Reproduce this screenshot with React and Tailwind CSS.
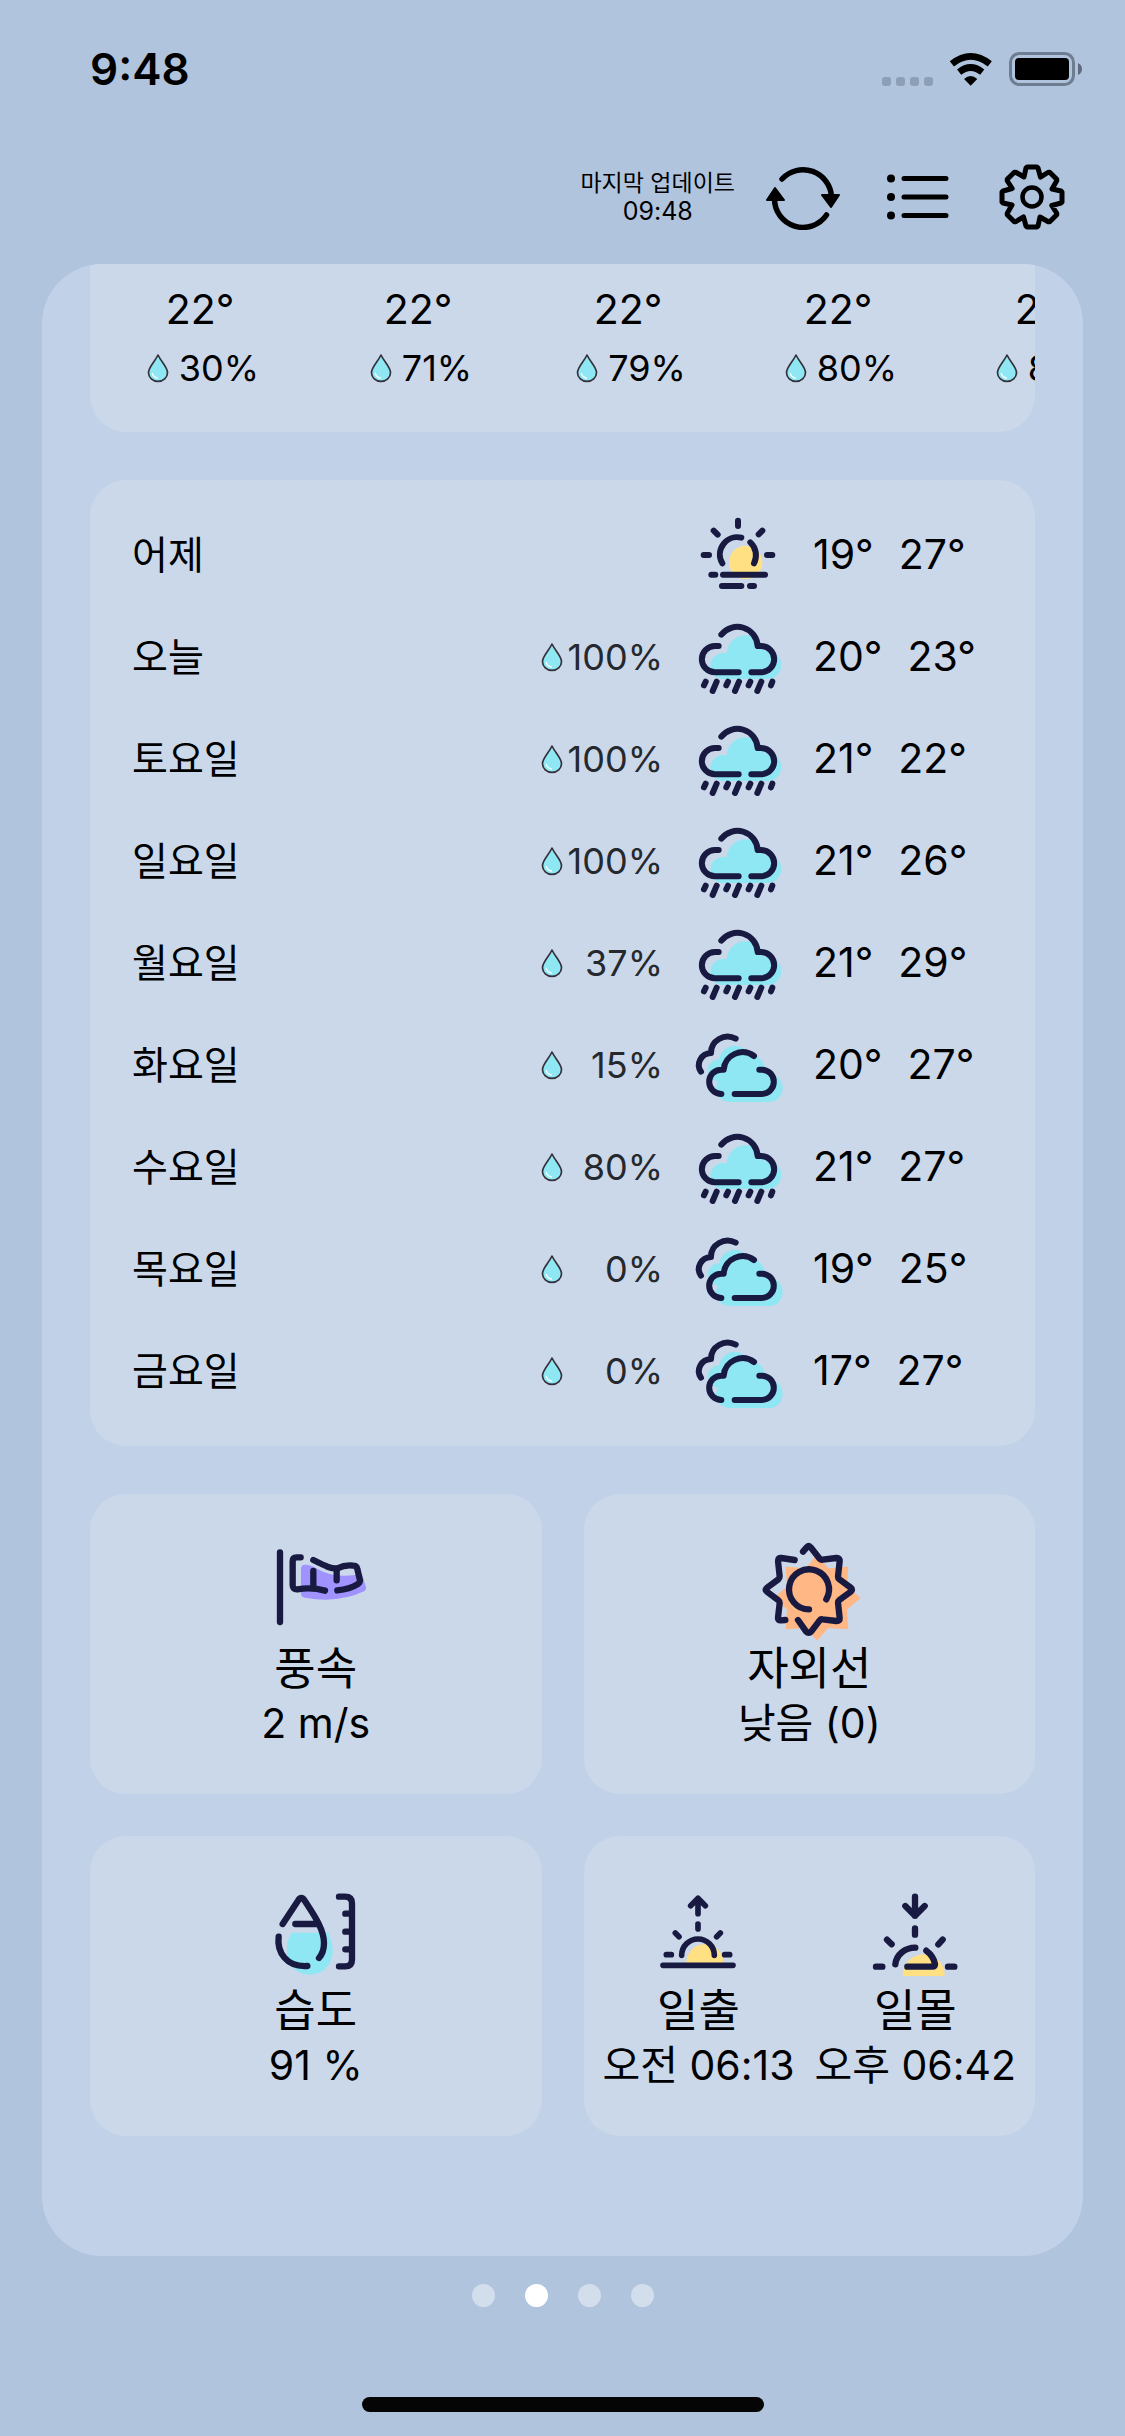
const NAVY = "#181a42";
const CYAN = "#8ee7f2";
const YELLOW = "#ffe082";

const stroke = (width, color = NAVY) => ({
  fill: "none",
  stroke: color,
  strokeWidth: width,
  strokeLinecap: "round",
  strokeLinejoin: "round",
});

function Drop({ className }) {
  return (
    <svg viewBox="63 456 66 90" className={className} aria-hidden="true">
      <path
        d="M96 462 C86 483 67.500 498 67.500 515 A28.500 26 0 0 0 124.500 515 C124.500 498 106 483 96 462Z"
        fill={CYAN}
        stroke="#33303a"
        strokeWidth="5"
        strokeLinejoin="round"
      />
      <path d="M79 517 Q81 528 94 531" {...stroke(4, "#ffffff")} />
    </svg>
  );
}

function HazySun() {
  return (
    <svg viewBox="519 60 270 270" className="size-[90px] shrink-0" role="img" aria-label="안개">
      <circle cx="677" cy="217" r="50" fill={YELLOW} />
      <g {...stroke(18)}>
        <path d="M654 92V108 M581 122L593 134 M727 122L716 133 M551 195H567 M741 195H757" />
        <path d="M574 254H586 M609 254H735 M606 288H664 M690 288H702" />
        <path d="M664 143A52 52 0 0 0 607 220 M691 157A53 53 0 0 1 702 220" />
      </g>
    </svg>
  );
}

function Rain() {
  return (
    <svg viewBox="519 368 270 270" className="size-[90px] shrink-0" role="img" aria-label="비">
      <path d="M610 569A39 39 0 0 1 610 491H620A57 57 0 0 1 733 485H742A42 42 0 0 1 742 569Z" fill={CYAN} />
      <g {...stroke(18)}>
        <path d="M604 436A61 61 0 0 1 713 470H723A39 39 0 0 1 723 549H694 M596 470H585A39 39 0 0 0 585 549H656" />
        <path d="M557 577L552 588 M590 577L578 605 M624 577L619 588 M657 577L645 605 M691 577L686 588 M724 577L712 605 M757 577L753 588" />
      </g>
    </svg>
  );
}

function Cloudy() {
  return (
    <svg viewBox="520 300 270 270" className="size-[90px] shrink-0" role="img" aria-label="흐림">
      <path d="M593 485A34 34 0 0 1 593 418H599A47 47 0 0 1 691 412V485Z" fill={CYAN} />
      <path d="M628 546A40 40 0 0 1 612 470L625 430A60 60 0 0 1 738 462H749A40 42 0 0 1 749 546Z" fill={CYAN} />
      <g {...stroke(18)}>
        <path d="M703 408A57 57 0 0 0 612 449H605A36 36 0 0 0 605 522 M719 449H726A36 36 0 0 1 726 522H645" />
        <path d="M648 356A50 48 0 0 0 574 399A38 36 0 0 0 544 455" />
      </g>
    </svg>
  );
}

function Windsock() {
  return (
    <svg viewBox="42 53 312 312" className="size-[104px]" aria-hidden="true">
      <path
        d="M165 133C195 133 205 155 250 163Q290 170 335 160L348 200Q350 208 342 213Q265 250 165 232Q153 230 153 220V145Q153 133 165 133Z"
        fill="#a093ff"
      />
      <g {...stroke(19)}>
        <path d="M90 96V305 M190 152V202 M260 146V180" />
        <path d="M152 111H140Q128 111 128 122V194Q128 208 142 207Q185 200 225 211" />
        <path d="M190 119C230 139 245 146 262 144Q285 133 310 136Q320 136 322 146L330 180Q330 188 322 192Q300 206 262 210" />
      </g>
    </svg>
  );
}

function UvSun() {
  return (
    <svg viewBox="112 53 312 312" className="size-[104px]" aria-hidden="true">
      <path
        d="M292 105L325 146L384 141L380 199L420 233L380 267L384 325L325 321L292 358L259 321L200 325L204 267L165 233L204 199L200 141L259 146Z"
        fill="#ffb885"
        stroke="#ffb885"
        strokeWidth="4"
        strokeLinejoin="round"
      />
      <g {...stroke(19)}>
        <path d="M250 94L261 81Q267 73 273 81L300 115Q304 119 309 118L350 113Q361 112 360 123L355 169Q355 174 359 177L393 202Q401 208 393 214L359 239Q355 242 355 247L360 293Q361 303 350 302L309 297Q303 296 300 300L275 333Q267 342 259 333L235 299" />
        <path d="M197 299L184 300Q174 301 175 292L180 248Q180 243 176 240L142 214Q134 208 142 202L176 177Q180 173 180 168L175 122Q174 112 185 113L225 119" />
        <path d="M320 237A60 60 0 1 0 268 267" />
      </g>
    </svg>
  );
}

function Humidity() {
  return (
    <svg viewBox="42 28 312 312" className="size-[104px]" aria-hidden="true">
      <path d="M130 186H235Q248 215 248 243A69 69 0 0 1 110 243Q110 215 120 192Q123 186 130 186Z" fill={CYAN} />
      <g {...stroke(19)}>
        <path d="M98 160L144 90Q154 74 164 90C190 130 222 175 222 217Q222 245 207 262 M136 160H205 M86 198C80 245 110 290 172 286" />
        <path d="M267 78H285Q306 78 306 98V267Q306 287 285 287H267 M286 129H304 M286 183H304 M286 236H304" />
      </g>
    </svg>
  );
}

function Sunrise() {
  return (
    <svg viewBox="174 28 312 312" className="size-[104px]" aria-hidden="true">
      <path d="M295 276A55.500 55.500 0 0 1 406 276Z" fill={YELLOW} />
      <g {...stroke(17)}>
        <path d="M225 284H435 M235 252H250 M410 252H425 M262 187L273 198 M397 187L386 198 M330 160V175" />
        <path d="M281 254A48 48 0 0 1 379 254 M330 129V84 M308 105L330 83L352 105" />
      </g>
    </svg>
  );
}

function Sunset() {
  return (
    <svg viewBox="822 28 312 312" className="size-[104px]" aria-hidden="true">
      <path d="M941 312A63 61 0 0 1 1067 312Q1067 316 1063 316H945Q941 316 941 312Z" fill={YELLOW} />
      <g {...stroke(19)}>
        <path d="M861 288H880 M1077 288H1096 M894 207L908 221 M1061 207L1048 221 M978 173V192" />
        <path d="M978 78V135 M949 106L978 135L1007 106" />
        <path d="M919 281A60 54 0 0 1 979 231 M1012 240C1028 252 1036 268 1038 280Q1039 288 1030 288H955" />
      </g>
    </svg>
  );
}

function StatusBar() {
  return (
    <div className="flex items-end justify-between pt-[42px] pr-[42px] pl-[90px] text-black">
      <div className="font-['Inter',sans-serif] text-[44px] leading-[54px] font-semibold">9:48</div>
      <div className="mb-[10px] flex items-end gap-[15px]">
        <div className="flex gap-[5px]">
          {[0, 1, 2, 3].map((i) => (
            <span key={i} className="size-[9px] rounded-[3px] bg-[#8d9fb6]" />
          ))}
        </div>
        <svg viewBox="295 66 138 100" className="h-[33px] w-[46px]" aria-hidden="true">
          <path d="M306 99Q363 54 421 99" fill="none" stroke="#000" strokeWidth="20" />
          <path d="M328 124Q363 96 398 124" fill="none" stroke="#000" strokeWidth="20" />
          <path d="M343 145Q363 126 383 145L363 165Z" fill="#000" />
        </svg>
        <svg viewBox="0 0 74 34" className="h-[34px] w-[74px]" aria-hidden="true">
          <rect x="1.500" y="1.500" width="63" height="31" rx="9" fill="none" stroke="#6f7d90" strokeWidth="3" />
          <rect x="6" y="6" width="54" height="22" rx="4" fill="#000" />
          <path d="M69 11Q73 13 73 17T69 23Z" fill="#5f6b7c" />
        </svg>
      </div>
    </div>
  );
}

function gearPath() {
  const points = [];
  for (let i = 0; i < 8; i++) {
    const a = (i * Math.PI) / 4;
    for (const [x, y] of [
      [-8, -20],
      [-6, -29],
      [-5, -30],
      [5, -30],
      [6, -29],
    ]) {
      points.push(
        `${(33 + x * Math.cos(a) - y * Math.sin(a)).toFixed(2)} ${(33 + x * Math.sin(a) + y * Math.cos(a)).toFixed(2)}`
      );
    }
  }
  return `M${points.join("L")}Z`;
}

function Toolbar() {
  return (
    <header className="mt-[68px] flex items-center justify-end pr-[60px] text-black">
      <p className="mr-[28px] text-center text-[23px] leading-[28px]">
        마지막 업데이트
        <br />
        <span className="text-[25px]">09:48</span>
      </p>
      <button type="button" aria-label="새로고침" className="mr-[43px]">
        <svg viewBox="0 0 80 66" className="h-[66px] w-[80px]" aria-hidden="true">
          <path d="M19 15A28.500 28.500 0 0 1 68.500 33 M11.500 35A28.500 28.500 0 0 0 63.500 51" {...stroke(5.5, "#000")} />
          <path d="M59 31H76L68 43Z M12 24L4 36H21Z" fill="#000" stroke="#000" strokeWidth="2" strokeLinejoin="round" />
        </svg>
      </button>
      <button type="button" aria-label="지역 목록" className="mr-[50px]">
        <svg viewBox="0 0 63 48" className="h-[48px] w-[63px]" aria-hidden="true">
          <path d="M18 5.500H60 M18 24H60 M18 42.500H60" {...stroke(5, "#000")} />
          <circle cx="5" cy="5.500" r="4" />
          <circle cx="5" cy="24" r="4" />
          <circle cx="5" cy="42.500" r="4" />
        </svg>
      </button>
      <button type="button" aria-label="설정">
        <svg viewBox="0 0 66 66" className="size-[66px]" aria-hidden="true">
          <path d={gearPath()} {...stroke(5, "#000")} />
          <circle cx="33" cy="33" r="9.500" {...stroke(4.5, "#000")} />
        </svg>
      </button>
    </header>
  );
}

const hours = [
  { temp: "22°", rain: "30%", width: "w-[220px]" },
  { temp: "22°", rain: "71%", width: "w-[216px]" },
  { temp: "22°", rain: "79%", width: "w-[204px]" },
  { temp: "22°", rain: "80%", width: "w-[216px]" },
  { temp: "22°", rain: "80%", width: "w-[206px]" },
];

const days = [
  { name: "어제", rain: null, Icon: HazySun, low: "19°", high: "27°" },
  { name: "오늘", rain: "100%", Icon: Rain, low: "20°", high: "23°" },
  { name: "토요일", rain: "100%", Icon: Rain, low: "21°", high: "22°" },
  { name: "일요일", rain: "100%", Icon: Rain, low: "21°", high: "26°" },
  { name: "월요일", rain: "37%", Icon: Rain, low: "21°", high: "29°" },
  { name: "화요일", rain: "15%", Icon: Cloudy, low: "20°", high: "27°" },
  { name: "수요일", rain: "80%", Icon: Rain, low: "21°", high: "27°" },
  { name: "목요일", rain: "0%", Icon: Cloudy, low: "19°", high: "25°" },
  { name: "금요일", rain: "0%", Icon: Cloudy, low: "17°", high: "27°" },
];

function Hourly() {
  return (
    <ul className="flex overflow-hidden rounded-b-[36px] bg-[#cbd8ea] pt-[18px] pb-8">
      {hours.map((h, i) => (
        <li key={i} className={`flex shrink-0 flex-col items-center ${h.width}`}>
          <span className="text-[41px] leading-[54px]">{h.temp}</span>
          <span className="flex items-center gap-2.5 pl-1.5 text-[36px] leading-[64px]">
            <Drop className="h-[30px] w-[22px]" />
            {h.rain}
          </span>
        </li>
      ))}
    </ul>
  );
}

function Daily() {
  return (
    <ul className="mt-12 rounded-[36px] bg-[#cbd8ea] px-[42px] py-6">
      {days.map(({ name, rain, Icon, low, high }) => (
        <li key={name} className="flex h-[102px] items-center">
          <span className="flex-1 text-[39px]">{name}</span>
          {rain && (
            <span className="mr-[30px] flex w-[122px] items-center justify-between text-[36px] text-[#25282c]">
              <Drop className="h-[30px] w-[22px] shrink-0" />
              {rain}
            </span>
          )}
          <Icon />
          <span className="ml-[30px] flex w-[180px] gap-[25px] text-[41px]">
            <span>{low}</span>
            <span>{high}</span>
          </span>
        </li>
      ))}
    </ul>
  );
}

function Stat({ Icon, title, value }) {
  return (
    <div className="flex flex-col items-center whitespace-nowrap">
      <Icon />
      <span className="text-[45px] leading-[54px]">{title}</span>
      <span className="text-[41px] leading-[54px]">{value}</span>
    </div>
  );
}

function Card({ children }) {
  return (
    <section className="flex h-[300px] items-center justify-center gap-5 rounded-[36px] bg-[#cbd8ea]">{children}</section>
  );
}

export default function App() {
  return (
    <div className="flex min-h-screen flex-col bg-[#b0c4de] font-['Inter','Noto_Sans_CJK_KR',sans-serif] text-black">
      <StatusBar />
      <Toolbar />
      <main className="mx-[42px] mt-[34px] overflow-hidden rounded-[60px] bg-[#c1d1e8] px-12 pb-[120px]">
        <Hourly />
        <Daily />
        <div className="mt-12 grid grid-cols-2 gap-[42px]">
          <Card>
            <Stat Icon={Windsock} title="풍속" value="2 m/s" />
          </Card>
          <Card>
            <Stat Icon={UvSun} title="자외선" value="낮음 (0)" />
          </Card>
          <Card>
            <Stat Icon={Humidity} title="습도" value="91 %" />
          </Card>
          <Card>
            <Stat Icon={Sunrise} title="일출" value="오전 06:13" />
            <Stat Icon={Sunset} title="일몰" value="오후 06:42" />
          </Card>
        </div>
      </main>
      <nav className="mt-[28px] flex justify-center gap-[30px]" aria-label="페이지">
        {[0, 1, 2, 3].map((i) => (
          <button
            key={i}
            type="button"
            aria-label={`${i + 1} 페이지`}
            aria-current={i === 1 ? "page" : undefined}
            className={i === 1 ? "size-[23px] rounded-full bg-white" : "size-[23px] rounded-full bg-[#d3deed]"}
          />
        ))}
      </nav>
      <div className="mx-auto mt-auto mb-6 h-[15px] w-[402px] rounded-full bg-[#050505]" />
    </div>
  );
}
